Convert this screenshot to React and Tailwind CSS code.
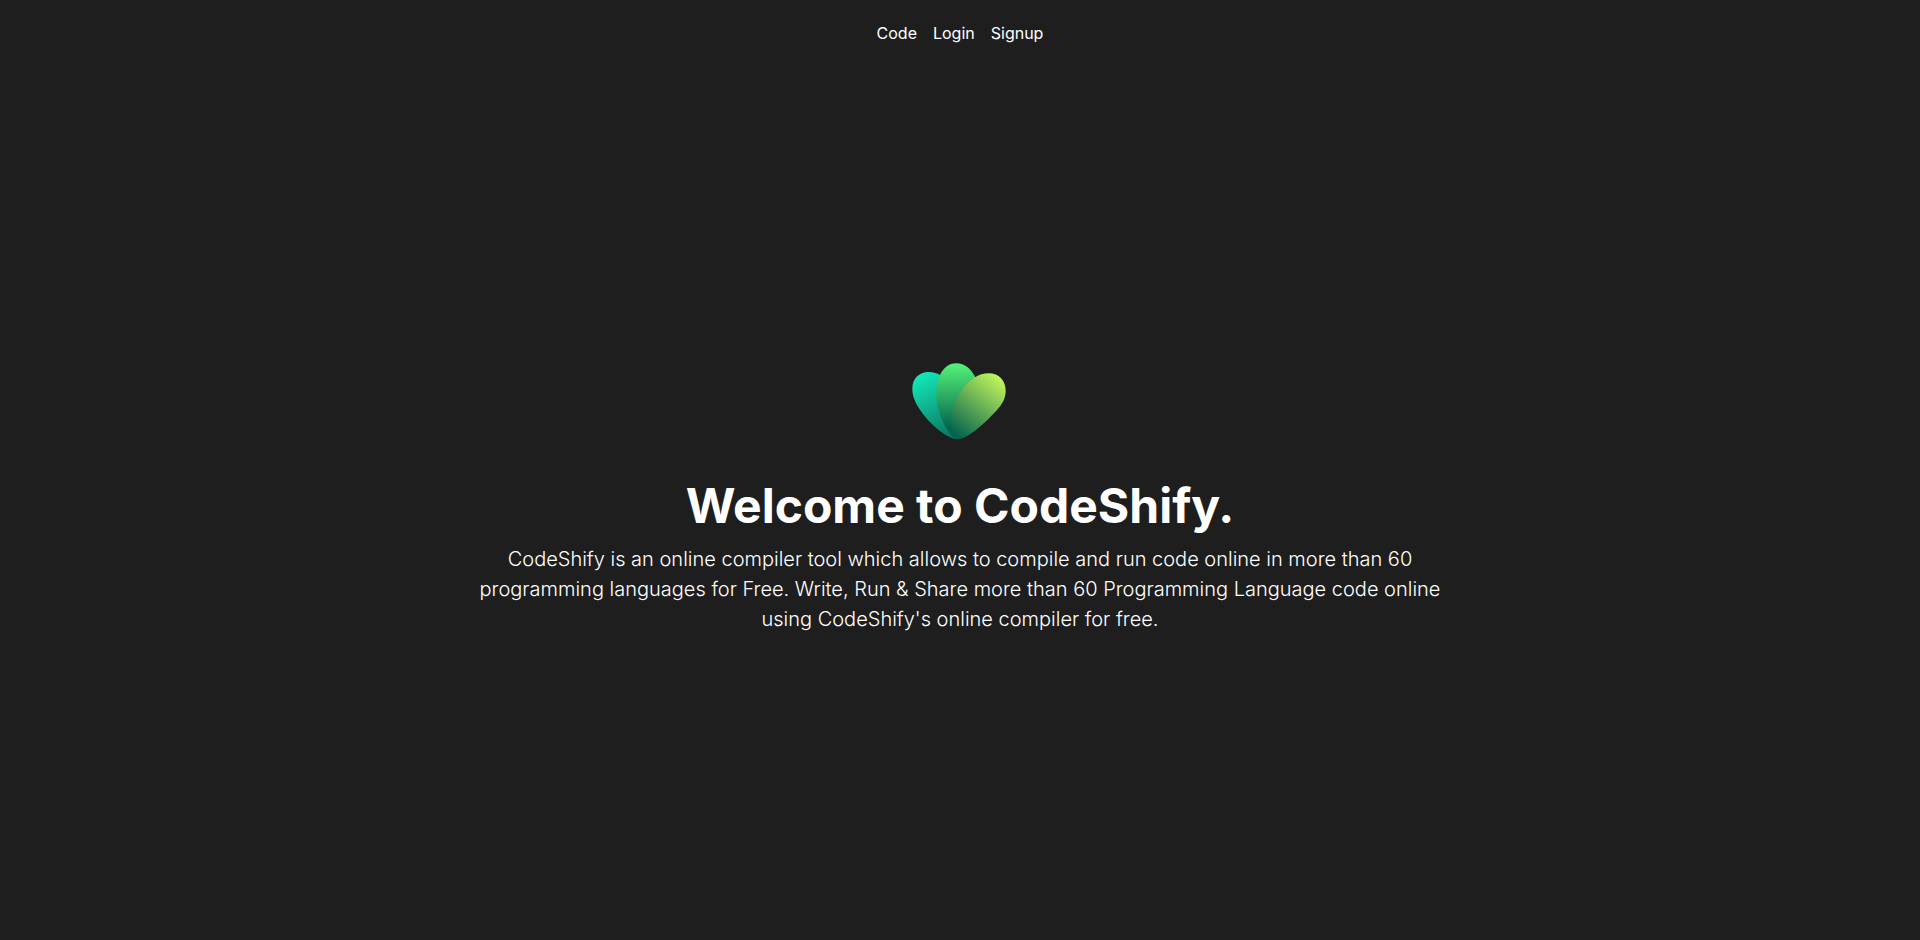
const links = [
  { label: "Code", href: "#code" },
  { label: "Login", href: "#login" },
  { label: "Signup", href: "#signup" },
];

function Logo() {
  return (
    <svg
      className="h-[100px] w-[120px]"
      viewBox="0 0 360 300"
      role="img"
      aria-label="CodeShify logo"
    >
      <defs>
        <linearGradient id="left" gradientUnits="userSpaceOnUse" x1="60" y1="70" x2="165" y2="262">
          <stop offset="0" stopColor="#14e8b8" />
          <stop offset="1" stopColor="#08705a" />
        </linearGradient>
        <linearGradient id="middle" gradientUnits="userSpaceOnUse" x1="168" y1="37" x2="168" y2="232">
          <stop offset="0" stopColor="#55f378" />
          <stop offset="1" stopColor="#04644e" />
        </linearGradient>
        <linearGradient id="right" gradientUnits="userSpaceOnUse" x1="294" y1="78" x2="160" y2="245">
          <stop offset="0" stopColor="#c0f35c" />
          <stop offset="1" stopColor="#04644e" />
        </linearGradient>
      </defs>
      <path
        fill="url(#left)"
        d="M172 265C142 264 88 220 59 175C44 152 37 133 37 113C37 83 57 63 86 63C101 63 112 67 124 74L172 160Z"
      />
      <path
        fill="url(#middle)"
        d="M172 265C145 258 109 184 109 128C109 75 132 37 169 37C194 37 213 53 226 79L240 170Z"
      />
      <path
        fill="url(#right)"
        d="M172 265C160 263 153 246 153 222C153 165 182 104 225 79C237 71 251 67 266 67C297 67 317 89 317 119C317 141 307 160 289 179C259 211 207 263 172 265Z"
      />
    </svg>
  );
}

export default function App() {
  return (
    <div className="flex min-h-screen flex-col bg-[#1e1e1e] font-['Inter',sans-serif] text-white">
      <header className="flex min-h-[66px] items-center justify-center">
        <nav aria-label="Main">
          <ul className="flex justify-center gap-4 text-base">
            {links.map(({ label, href }) => (
              <li key={label}>
                <a href={href}>{label}</a>
              </li>
            ))}
          </ul>
        </nav>
      </header>
      <main className="flex flex-1 flex-col items-center justify-center px-4 pb-[22px] text-center">
        <Logo />
        <h1 className="mt-6 text-5xl leading-[62px] font-bold">Welcome to CodeShify.</h1>
        <p className="mt-[7px] max-w-[1000px] text-xl leading-[30px] font-light">
          CodeShify is an online compiler tool which allows to compile and run code online in more
          than 60 programming languages for Free. Write, Run &amp; Share more than 60 Programming
          Language code online using CodeShify's online compiler for free.
        </p>
      </main>
    </div>
  );
}
